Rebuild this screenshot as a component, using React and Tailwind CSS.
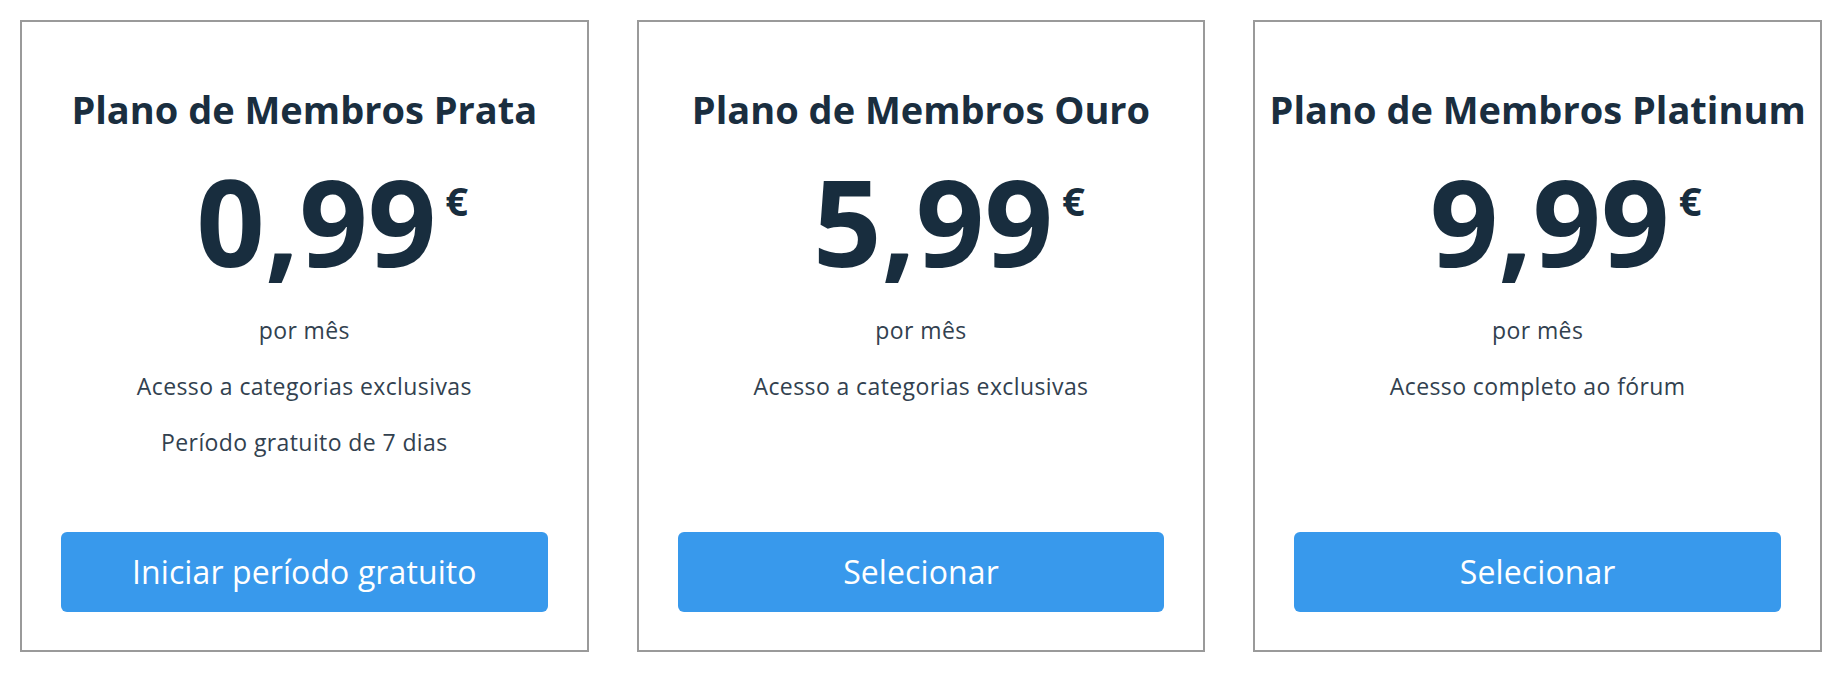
import React from "react";

const plans = [
  {
    title: "Plano de Membros Prata",
    price: "0,99",
    features: ["Acesso a categorias exclusivas", "Período gratuito de 7 dias"],
    cta: "Iniciar período gratuito",
  },
  {
    title: "Plano de Membros Ouro",
    price: "5,99",
    features: ["Acesso a categorias exclusivas"],
    cta: "Selecionar",
  },
  {
    title: "Plano de Membros Platinum",
    price: "9,99",
    features: ["Acesso completo ao fórum"],
    cta: "Selecionar",
  },
];

function Card({ plan }) {
  return (
    <div className="min-w-0 h-[632px] border-2 border-[#9a9a9a] bg-white flex flex-col items-center pt-[63px] pb-[38px]">
      <h2 className="text-[38px] leading-[48px] font-bold text-[#1a2e3f] whitespace-nowrap">
        {plan.title}
      </h2>
      <div className="mt-[28px] flex justify-center pl-6">
        <span className="relative text-[120px] leading-[120px] font-bold text-[#182d3e]">
          {plan.price}
          <span className="absolute left-full top-[20px] ml-[9px] text-[40px] leading-[40px] font-bold">
            €
          </span>
        </span>
      </div>
      <div className="mt-[33px] flex flex-col items-center gap-[24px] text-[23px] leading-[32px] tracking-[0.4px] text-[#32414f]">
        <p>por mês</p>
        {plan.features.map((f) => (
          <p key={f}>{f}</p>
        ))}
      </div>
      <button className="mt-auto self-stretch mx-[39px] h-[80px] rounded-[6px] bg-[#3899ec] text-white text-[32px] tracking-[0.1px] font-normal">
        {plan.cta}
      </button>
    </div>
  );
}

export default function App() {
  return (
    <div
      className="w-[1842px] h-[674px] bg-white grid grid-cols-3 gap-12 p-5 items-start"
      style={{ fontFamily: '"Open Sans", "Noto Sans", sans-serif' }}
    >
      {plans.map((p) => (
        <Card key={p.title} plan={p} />
      ))}
    </div>
  );
}
